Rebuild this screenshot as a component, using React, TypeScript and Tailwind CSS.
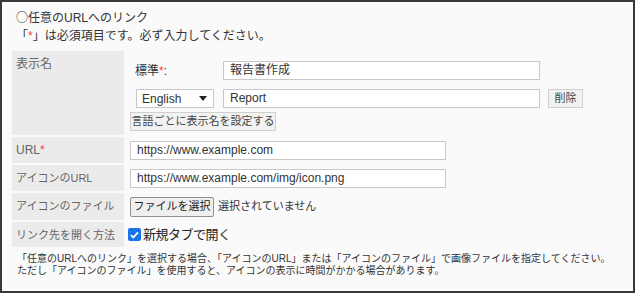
const font = "font-['Liberation_Sans','Noto_Sans_CJK_JP',sans-serif]";

function Label({ children }: { children: React.ReactNode }) {
  return (
    <div className="bg-[#ebebeb] pl-[4px] pt-[4px] text-[11px] leading-[18px] text-[#666]">
      {children}
    </div>
  );
}

function TextBox({ value, w }: { value: string; w: string }) {
  return (
    <div
      className={`${w} h-[19px] border border-[#c8c8c8] bg-white pl-[6px] text-[12px] leading-[17px] text-[#333]`}
    >
      {value}
    </div>
  );
}

function Req() {
  return <span className="text-[#e8473b]">*</span>;
}

export default function App() {
  return (
    <div
      className={`${font} h-[293px] w-[635px] border-2 border-[#3a3a3a] bg-[#fafafa] text-[#333]`}
    >
      <div className="pl-[14px] pt-[6px] text-[12px] leading-[18px]">
        <p>
          <span className="font-['Noto_Sans_CJK_JP',sans-serif]">○</span>任意のURLへのリンク
        </p>
        <p>
          「<Req />」は必須項目です。必ず入力してください。
        </p>
      </div>

      <div className="ml-[10px] mt-[6px] grid w-[600px] grid-cols-[112px_1fr] gap-[2px]">
        <Label>
          <span className="text-[12px]">表示名</span>
        </Label>
        <div className="flex h-[84px] flex-col pt-[10px]">
          <div className="flex items-center pl-[9px]">
            <span className="w-[88px] text-[12px] text-[#333]">
              標準<Req />:
            </span>
            <TextBox value="報告書作成" w="w-[317px]" />
          </div>
          <div className="mt-[9px] flex items-center pl-[10px]">
            <div className="flex h-[19px] w-[78px] items-center justify-between border border-[#c8c8c8] bg-white pl-[5px] pr-[6px] text-[12px]">
              <span>English</span>
              <svg width="8" height="5" viewBox="0 0 8 5">
                <path d="M0 0h8L4 5z" fill="#222" />
              </svg>
            </div>
            <div className="ml-[9px]">
              <TextBox value="Report" w="w-[317px]" />
            </div>
            <div className="ml-[8px] flex h-[19px] w-[35px] items-center justify-center border border-[#cfcfcf] bg-[#f2f2f2] text-[11px] text-[#444]">
              削除
            </div>
          </div>
          <div className="ml-[4px] mt-[4px] flex h-[19px] w-[146px] items-center justify-center whitespace-nowrap border border-[#cfcfcf] bg-[#f2f2f2] text-[11px] text-[#444]">
            言語ごとに表示名を設定する
          </div>
        </div>

        <Label>
          <span className="text-[12px]">
            URL<Req />
          </span>
        </Label>
        <div className="flex h-[26px] items-center pl-[4px]">
          <TextBox value="https://www.example.com" w="w-[316px]" />
        </div>

        <Label>アイコンのURL</Label>
        <div className="flex h-[26px] items-center pl-[4px]">
          <TextBox value="https://www.example.com/img/icon.png" w="w-[316px]" />
        </div>

        <Label>アイコンのファイル</Label>
        <div className="flex h-[27px] items-center pl-[4px]">
          <div className="flex h-[20px] w-[84px] items-center justify-center whitespace-nowrap rounded-[2px] border border-[#8f8f8f] bg-[#efefef] text-[11px] text-[#222]">
            ファイルを選択
          </div>
          <span className="ml-[4px] text-[11px] text-[#333]">選択されていません</span>
        </div>

        <Label>リンク先を開く方法</Label>
        <div className="flex h-[25px] items-center pl-[2px]">
          <div className="flex h-[13px] w-[13px] items-center justify-center rounded-[2px] bg-[#1a73e8]">
            <svg width="9" height="8" viewBox="0 0 9 8">
              <path d="M1 4.2l2.3 2.3L8 1.3" stroke="white" strokeWidth="1.8" fill="none" />
            </svg>
          </div>
          <span className="ml-[2px] text-[13px] tracking-[-0.5px] text-[#222]">
            新規タブで開く
          </span>
        </div>
      </div>

      <div className="mt-[6px] pl-[15px] text-[10px] leading-[12px] text-[#333]">
        <p>
          「任意のURLへのリンク」を選択する場合、「アイコンのURL」または「アイコンのファイル」で画像ファイルを指定してください。
        </p>
        <p>ただし「アイコンのファイル」を使用すると、アイコンの表示に時間がかかる場合があります。</p>
      </div>
    </div>
  );
}
